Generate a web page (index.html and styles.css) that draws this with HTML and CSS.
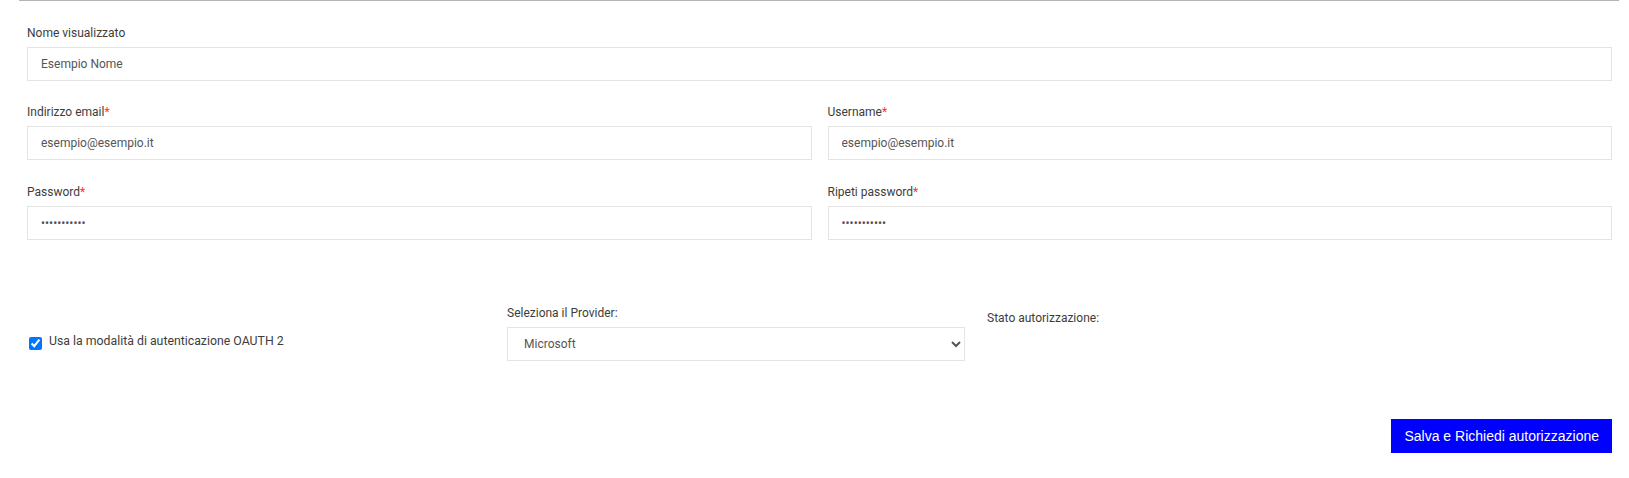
FILE: index.html
```html
<!DOCTYPE html>
<html lang="it">
<head>
<meta charset="utf-8">
<title>Account</title>
<link rel="stylesheet" href="styles.css">
</head>
<body>
<div class="page">
  <form class="form">
    <div class="field">
      <label class="label">Nome visualizzato</label>
      <input class="input" type="text" value="Esempio Nome">
    </div>
    <div class="row row-spaced">
      <div class="field">
        <label class="label">Indirizzo email<span class="req">*</span></label>
        <input class="input" type="text" value="esempio@esempio.it">
      </div>
      <div class="field">
        <label class="label">Username<span class="req">*</span></label>
        <input class="input" type="text" value="esempio@esempio.it">
      </div>
    </div>
    <div class="row">
      <div class="field">
        <label class="label">Password<span class="req">*</span></label>
        <input class="input" type="password" value="esempio1234">
      </div>
      <div class="field">
        <label class="label">Ripeti password<span class="req">*</span></label>
        <input class="input" type="password" value="esempio1234">
      </div>
    </div>
    <div class="oauth">
      <label class="check">
        <input class="checkbox" type="checkbox" checked>
        <span class="check-text">Usa la modalità di autenticazione OAUTH 2</span>
      </label>
      <div class="provider">
        <label class="label">Seleziona il Provider:</label>
        <select class="select">
          <option>Microsoft</option>
          <option>Google</option>
        </select>
      </div>
      <div class="status">
        <span class="label">Stato autorizzazione:</span>
      </div>
    </div>
    <div class="actions">
      <button class="btn" type="button">Salva e Richiedi autorizzazione</button>
    </div>
  </form>
</div>
</body>
</html>
```
FILE: styles.css
```css
html, body {
  margin: 0;
  padding: 0;
  background: #ffffff;
}

body {
  font-family: Roboto, "Liberation Sans", Arial, sans-serif;
  color: #3d3d3d;
}

.page {
  margin: 0 10px 0 19px;
  border-top: 1px solid #b4b4b4;
  padding: 25px 7px 0 8px;
}

.form {
  display: flex;
  flex-direction: column;
}

.field {
  display: flex;
  flex-direction: column;
  margin-bottom: 24px;
}

.row {
  display: grid;
  grid-template-columns: 1fr 1fr;
  column-gap: 16px;
}

.row-spaced {
  margin-bottom: 1px;
}

.label {
  display: block;
  font-size: 12px;
  line-height: 14px;
  color: #3d3d3d;
  margin-bottom: 7px;
}

.req {
  color: #ff3030;
}

.input {
  box-sizing: border-box;
  height: 34px;
  width: 100%;
  border: 1px solid #e4e4e4;
  border-radius: 0;
  padding: 0 13px;
  font-family: Roboto, "Liberation Sans", Arial, sans-serif;
  font-size: 12px;
  color: #555555;
  background: #ffffff;
  outline: none;
}

.oauth {
  display: grid;
  grid-template-columns: 480px 458px 1fr;
  align-items: start;
  margin-top: 42px;
}

.check {
  display: flex;
  align-items: flex-start;
  padding-top: 27px;
  padding-left: 2px;
}

.checkbox {
  margin: 4px 7px 0 0;
  width: 13px;
  height: 13px;
  accent-color: #0075ff;
}

.check-text {
  font-size: 12.3px;
  line-height: 16px;
  color: #3d3d3d;
}

.provider {
  display: flex;
  flex-direction: column;
}

.select {
  box-sizing: border-box;
  height: 34px;
  width: 100%;
  border: 1px solid #e4e4e4;
  border-radius: 0;
  padding: 0 8px 0 12px;
  font-family: Roboto, "Liberation Sans", Arial, sans-serif;
  font-size: 12px;
  color: #555555;
  background: #ffffff;
  outline: none;
}

.status {
  padding-left: 22px;
  padding-top: 5px;
}

.actions {
  display: flex;
  justify-content: flex-end;
  margin-top: 58px;
}

.btn {
  height: 34px;
  padding: 0 13px;
  border: none;
  border-radius: 0;
  background: #0000ff;
  color: #ffffff;
  font-family: Arial, "Liberation Sans", sans-serif;
  font-size: 14px;
  cursor: pointer;
}
```
